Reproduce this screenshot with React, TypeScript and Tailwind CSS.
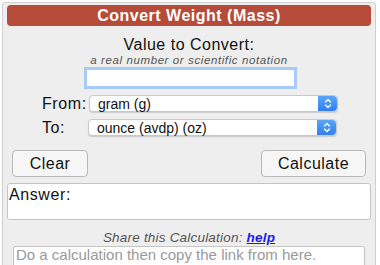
import React from "react";

function Stepper() {
  return (
    <div className="flex h-full w-[19px] items-center justify-center rounded-r-[4px] bg-gradient-to-b from-[#5aa5f8] to-[#2f7ff0]">
      <svg width="8" height="11" viewBox="0 0 8 11" fill="none" stroke="white" strokeWidth="1.4" strokeLinecap="round" strokeLinejoin="round">
        <path d="M1.5 4 L4 1.5 L6.5 4" />
        <path d="M1.5 7 L4 9.5 L6.5 7" />
      </svg>
    </div>
  );
}

function Select({ label }: { label: string }) {
  return (
    <div className="flex h-[17px] w-[249px] items-stretch rounded-[4px] border border-[#c9c9c9] bg-white shadow-[0_1px_1px_rgba(0,0,0,0.15)]">
      <div className="flex flex-1 items-center pl-[8px] text-[14px] leading-none text-[#111]">{label}</div>
      <Stepper />
    </div>
  );
}

export default function App() {
  return (
    <div className="h-[265px] w-[380px] overflow-hidden bg-white pl-[2px] pt-[2px]" style={{ fontFamily: '"Liberation Sans", Arial, sans-serif' }}>
      <div className="h-[280px] w-[374px] rounded-t-[3px] border border-[#cfcfcf] bg-[#eeeeee] px-[4px] pt-[2px]">
        <div className="flex h-[21px] items-center justify-center rounded-[4px] bg-[#b64b3a] text-[16px] font-bold tracking-[0.5px] text-white">
          Convert Weight (Mass)
        </div>
        <div className="mt-[11px] text-center text-[16px] leading-[16px] tracking-[0.5px] text-[#111]">Value to Convert:</div>
        <div className="mt-[1px] text-center text-[11.5px] italic leading-[12px] tracking-[0.6px] text-[#555]">a real number or scientific notation</div>
        <div className="mt-[1px] flex justify-center">
          <div className="ml-[2px] h-[22px] w-[213px] border-[3px] border-[#a7cbf6] bg-white" />
        </div>
        <div className="mt-[6px] flex items-center">
          <div className="w-[35px] shrink-0" />
          <div className="w-[47px] shrink-0 text-[16px] leading-none tracking-[0.6px] text-[#111]">From:</div>
          <Select label="gram (g)" />
        </div>
        <div className="mt-[7px] flex items-center">
          <div className="w-[35px] shrink-0" />
          <div className="w-[46px] shrink-0 text-[16px] leading-none tracking-[0.6px] text-[#111]">To:</div>
          <Select label="ounce (avdp) (oz)" />
        </div>
        <div className="mt-[14px] flex justify-between pl-[5px] pr-[5px]">
          <button className="h-[27px] w-[76px] rounded-[4px] border border-[#b9b9b9] bg-[#f6f6f6] text-[16px] tracking-[0.5px] text-[#111]">Clear</button>
          <button className="h-[27px] w-[105px] rounded-[4px] border border-[#b9b9b9] bg-[#f6f6f6] text-[16px] tracking-[0.5px] text-[#111]">Calculate</button>
        </div>
        <div className="mt-[6px] h-[37px] rounded-[3px] border border-[#c4c4c4] bg-white px-[1px] pt-[2px] text-[16px] leading-[18px] tracking-[0.6px] text-[#111]">
          Answer:
        </div>
        <div className="mt-[11px] text-center text-[13.5px] italic leading-[14px] tracking-[0.2px] text-[#555]">
          Share this Calculation: <a className="font-bold text-[#1a1aee] underline">help</a>
        </div>
        <div className="mx-[6px] mt-[1px] h-[40px] rounded-[2px] border border-[#c4c4c4] bg-white px-[2px] text-[15px] leading-[16px] text-[#999]">
          Do a calculation then copy the link from here.
        </div>
      </div>
    </div>
  );
}
